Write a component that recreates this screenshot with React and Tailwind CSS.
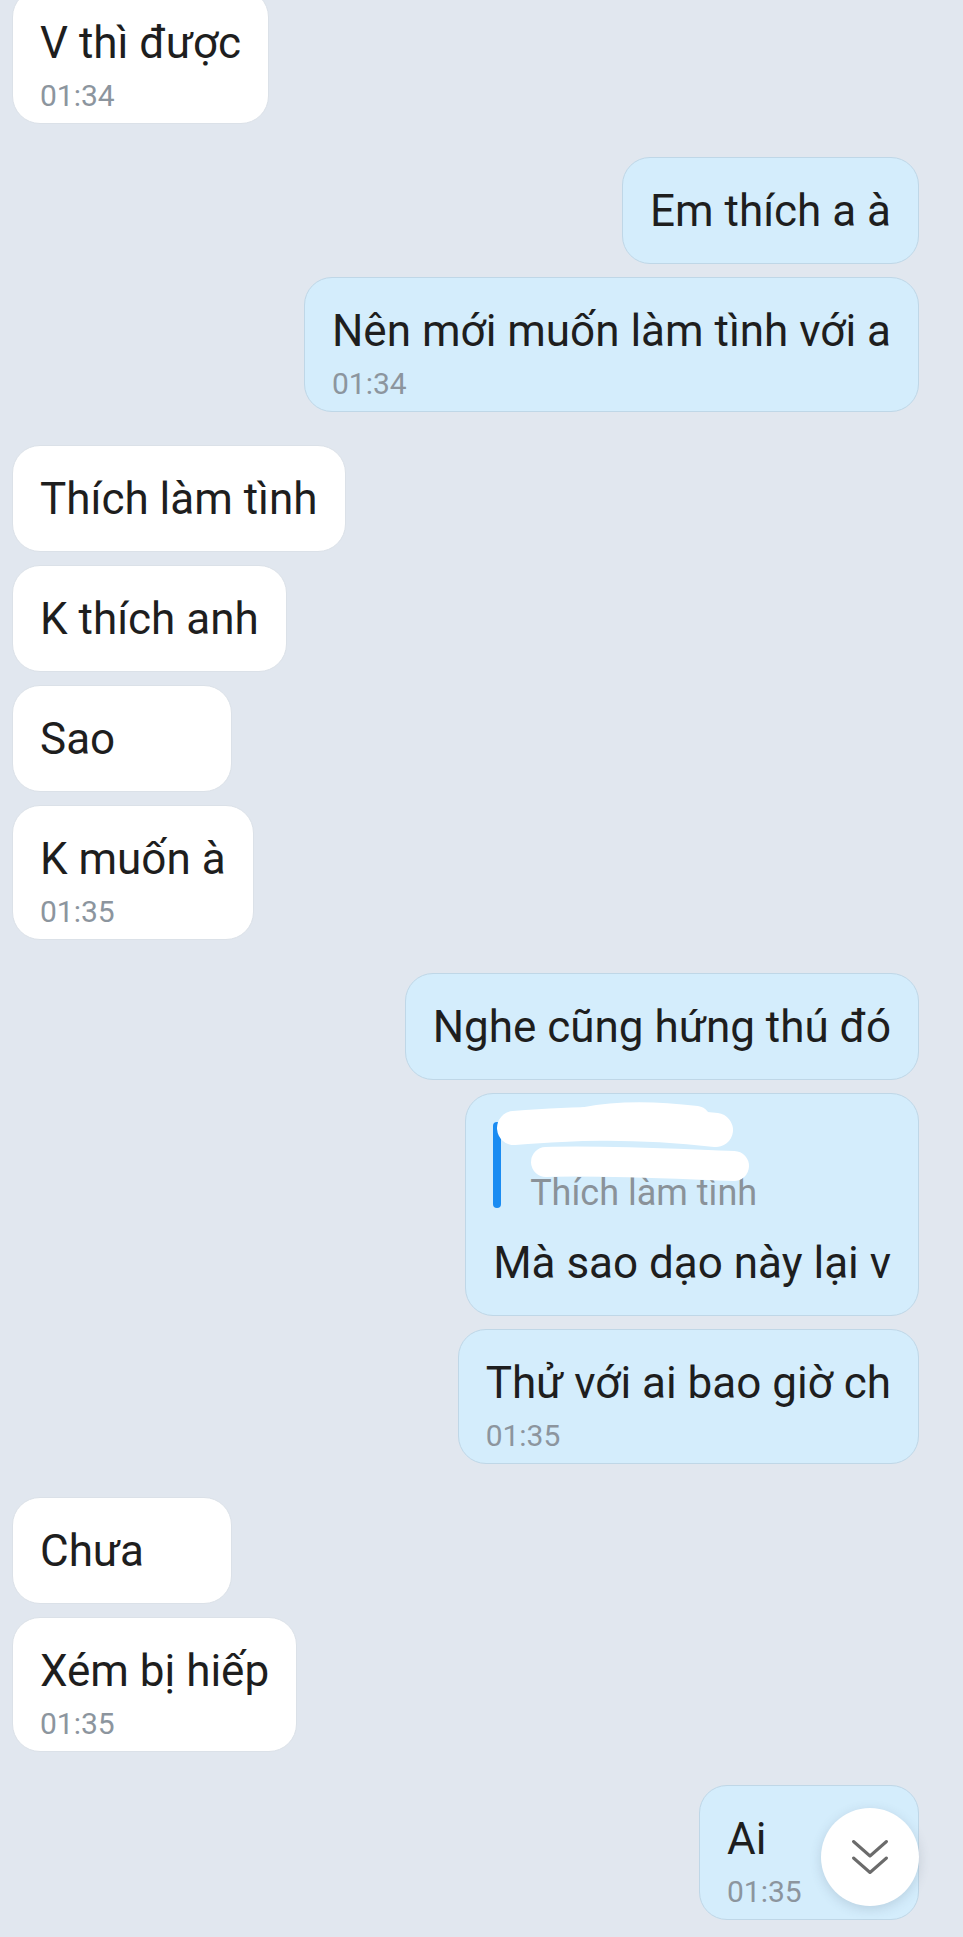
import React from "react";

const messages = [
    { id: 1, side: "left", text: "V thì được", time: "01:34", first: true },
    { id: 2, side: "right", text: "Em thích a à", newGroup: true },
    { id: 3, side: "right", text: "Nên mới muốn làm tình với a", time: "01:34" },
    { id: 4, side: "left", text: "Thích làm tình", newGroup: true },
    { id: 5, side: "left", text: "K thích anh" },
    { id: 6, side: "left", text: "Sao" },
    { id: 7, side: "left", text: "K muốn à", time: "01:35" },
    { id: 8, side: "right", text: "Nghe cũng hứng thú đó", newGroup: true },
    { id: 9, side: "right", text: "Mà sao dạo này lại v", quote: "Thích làm tình" },
    { id: 10, side: "right", text: "Thử với ai bao giờ ch", time: "01:35" },
    { id: 11, side: "left", text: "Chưa", newGroup: true },
    { id: 12, side: "left", text: "Xém bị hiếp", time: "01:35" },
    { id: 13, side: "right", text: "Ai", time: "01:35", newGroup: true },
];

// white marker scribble that hides the quoted sender's name
const Scribble = () => (
    <svg className="absolute left-0 top-0" width="300" height="100" viewBox="0 0 300 100" fill="none">
        <path d="M48 34 C 100 30, 160 26, 250 36" stroke="#ffffff" strokeWidth="34" strokeLinecap="round" />
        <path d="M120 28 C 150 22, 190 22, 230 27" stroke="#ffffff" strokeWidth="30" strokeLinecap="round" />
        <path d="M80 68 C 140 66, 210 70, 268 72" stroke="#ffffff" strokeWidth="30" strokeLinecap="round" />
    </svg>
);

const Bubble = ({ msg }) => {
    const isRight = msg.side === "right";
    const spacing = msg.first ? "-mt-[11px]" : msg.newGroup ? "mt-[33px]" : "mt-[13px]";
    const colors = isRight
        ? "self-end mr-[44px] bg-[#d4edfc] border-[#bfd7e7]"
        : "self-start ml-[12px] bg-white border-[#dbe1e8]";

    return (
        <div className={`${spacing} ${colors} relative min-w-[220px] rounded-[28px] border px-[27px] ${msg.quote ? "pt-[28px]" : "pt-[23px]"} ${msg.time ? "pb-[9px]" : "pb-[22px]"}`}>
            {msg.quote && (
                <>
                    <div className="flex items-start">
                        <div className="h-[86px] w-[8px] shrink-0 rounded-full bg-[#1a8cf2]" />
                        <div className="ml-[29px] flex flex-col">
                            <div className="h-[53px]" />
                            <div className="text-[36px] leading-[36px] text-[#8a9299]">{msg.quote}</div>
                        </div>
                    </div>
                    <Scribble />
                </>
            )}
            <div className={`${msg.quote ? "mt-[22px]" : ""} whitespace-nowrap text-[44px] leading-[60px] text-[#1e1e1e]`}>{msg.text}</div>
            {msg.time && (
                <div className="mt-[5px] text-[30px] leading-[36px] text-[#8c959e]">{msg.time}</div>
            )}
        </div>
    );
};

export default function App() {
    return (
        <div className="relative h-[1937px] w-[963px] overflow-hidden bg-[#e1e7ef]" style={{ fontFamily: "Roboto, 'Noto Sans', sans-serif" }}>
            <div className="flex flex-col">
                {messages.map((msg) => (
                    <Bubble key={msg.id} msg={msg} />
                ))}
            </div>

            <button className="absolute bottom-[31px] right-[44px] flex h-[98px] w-[98px] items-center justify-center rounded-full bg-white shadow-[0_3px_12px_rgba(60,80,100,0.18)]">
                <svg width="40" height="40" viewBox="0 0 40 40" fill="none" stroke="#6b6b6b" strokeWidth="3" strokeLinecap="round" strokeLinejoin="round">
                    <path d="M3.5 4.5 L20 19 L36.5 4.5" />
                    <path d="M3.5 21 L20 35.5 L36.5 21" />
                </svg>
            </button>
        </div>
    );
}
